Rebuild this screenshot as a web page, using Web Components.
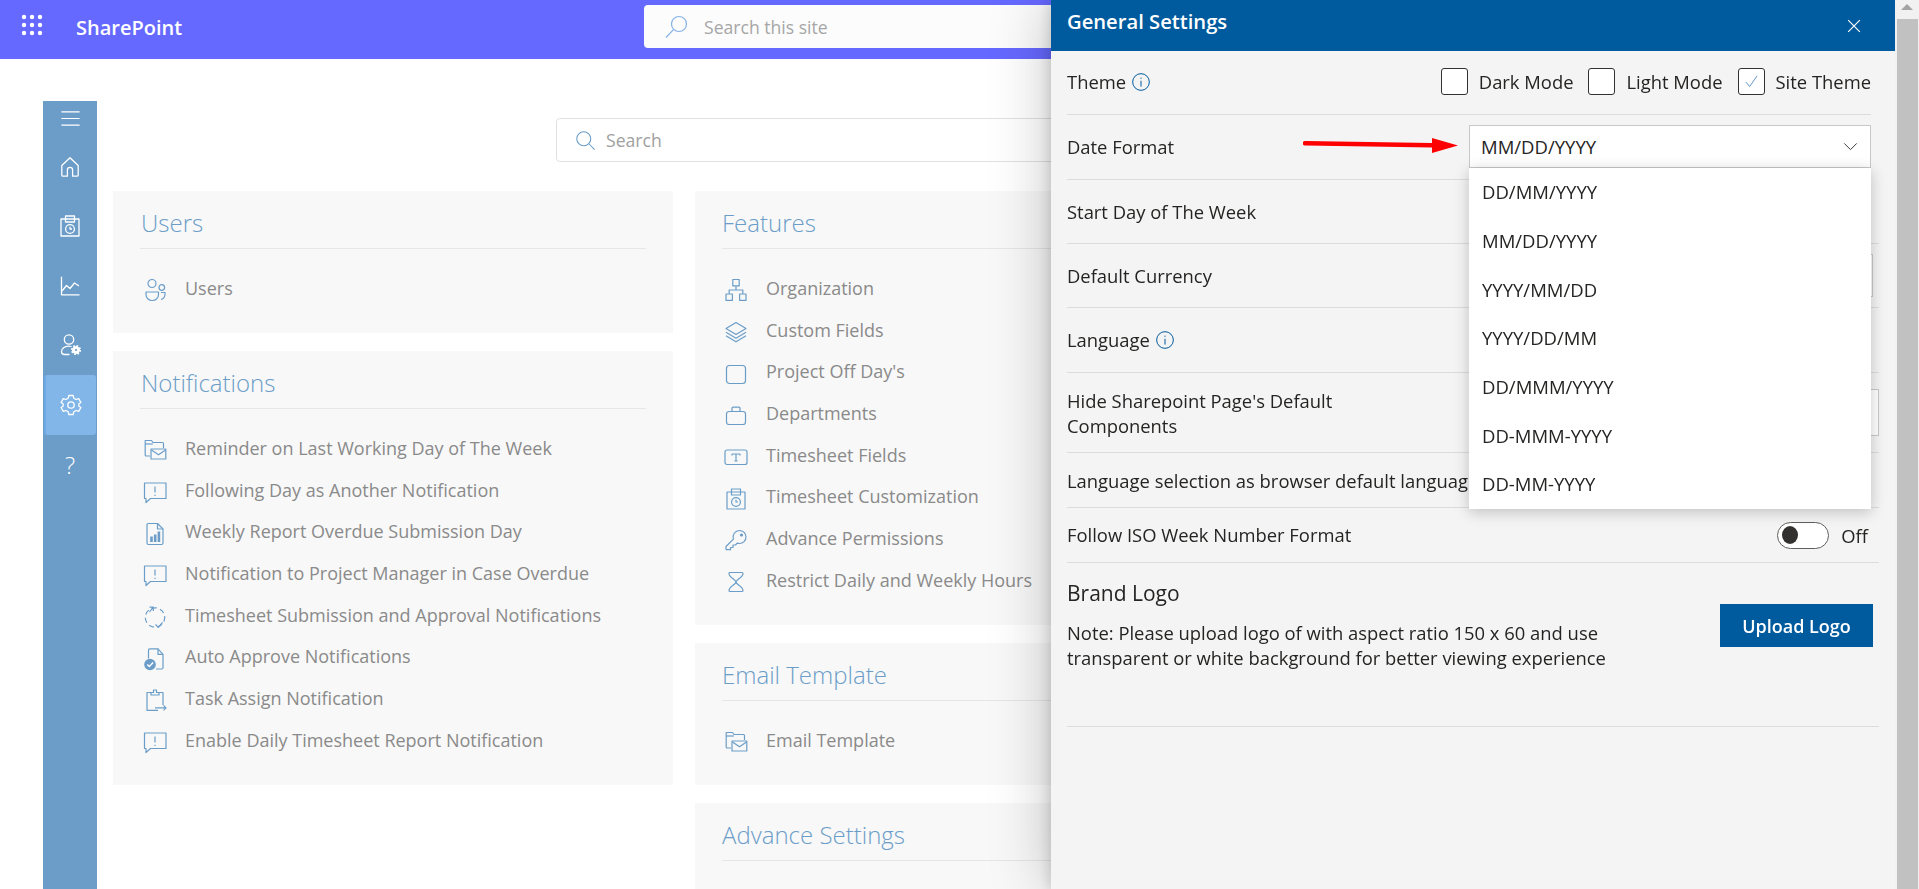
<!DOCTYPE html>
<html lang="en">
<head>
<meta charset="utf-8">
<title>General Settings</title>
<style>
html, body { margin: 0; height: 889px; overflow: hidden; background: #fff; }
body { font-family: "Open Sans", "Noto Sans", sans-serif; }
</style>
</head>
<body>
<app-header></app-header>
<app-workspace>
	<side-rail>
		<rail-item kind="menu" icon="menu"></rail-item>
		<rail-item icon="home"></rail-item>
		<rail-item icon="sheet"></rail-item>
		<rail-item icon="chart"></rail-item>
		<rail-item icon="usercog"></rail-item>
		<rail-item icon="gear" active></rail-item>
		<rail-item>?</rail-item>
	</side-rail>
	<admin-content>
		<info-card slot="left" title="Users">
			<card-row icon="people">Users</card-row>
		</info-card>
		<info-card slot="left" title="Notifications">
			<card-row icon="mailfolder">Reminder on Last Working Day of The Week</card-row>
			<card-row icon="bubble">Following Day as Another Notification</card-row>
			<card-row icon="report">Weekly Report Overdue Submission Day</card-row>
			<card-row icon="bubble">Notification to Project Manager in Case Overdue</card-row>
			<card-row icon="cycle">Timesheet Submission and Approval Notifications</card-row>
			<card-row icon="doccheck">Auto Approve Notifications</card-row>
			<card-row icon="clipboard">Task Assign Notification</card-row>
			<card-row icon="bubble">Enable Daily Timesheet Report Notification</card-row>
		</info-card>
		<info-card slot="right" title="Features" style="--nudge:-1px">
			<card-row icon="org">Organization</card-row>
			<card-row icon="layers">Custom Fields</card-row>
			<card-row icon="square">Project Off Day's</card-row>
			<card-row icon="briefcase">Departments</card-row>
			<card-row icon="textbox">Timesheet Fields</card-row>
			<card-row icon="sheet">Timesheet Customization</card-row>
			<card-row icon="key">Advance Permissions</card-row>
			<card-row icon="hourglass">Restrict Daily and Weekly Hours</card-row>
		</info-card>
		<info-card slot="right" title="Email Template" style="--nudge:-1px">
			<card-row icon="mailfolder">Email Template</card-row>
		</info-card>
		<info-card slot="right" title="Advance Settings" style="--nudge:-1px"></info-card>
	</admin-content>
</app-workspace>

<settings-panel title="General Settings">
	<setting-row style="--h:64px;--end:8px;--up:2px">
		<span>Theme <ui-icon name="info" size="20" color="#005a9e" style="vertical-align:-3px"></ui-icon></span>
		<theme-picker slot="control">
			<theme-check>Dark Mode</theme-check>
			<theme-check>Light Mode</theme-check>
			<theme-check checked>Site Theme</theme-check>
		</theme-picker>
	</setting-row>
	<setting-row style="--h:65px;--end:8px;--up:2px">
		Date Format
		<date-select slot="control" value="MM/DD/YYYY">
			<date-option>DD/MM/YYYY</date-option>
			<date-option>MM/DD/YYYY</date-option>
			<date-option>YYYY/MM/DD</date-option>
			<date-option>YYYY/DD/MM</date-option>
			<date-option>DD/MMM/YYYY</date-option>
			<date-option>DD-MMM-YYYY</date-option>
			<date-option>DD-MM-YYYY</date-option>
		</date-select>
	</setting-row>
	<setting-row style="--h:64px">Start Day of The Week</setting-row>
	<setting-row style="--h:64px">
		Default Currency
		<plain-box slot="control" style="--w:402px;--bh:43px;margin-right:6px"></plain-box>
	</setting-row>
	<setting-row style="--h:65px;--up:2px">
		<span>Language <ui-icon name="info" size="20" color="#005a9e" style="vertical-align:-3px"></ui-icon></span>
	</setting-row>
	<setting-row style="--h:80px">
		<span>Hide Sharepoint Page's Default<br>Components</span>
		<plain-box slot="control" style="--w:410px;--bh:47px"></plain-box>
	</setting-row>
	<setting-row style="--h:55px">Language selection as browser default language</setting-row>
	<setting-row style="--h:55px;--up:2px">
		Follow ISO Week Number Format
		<iso-toggle slot="control">Off</iso-toggle>
	</setting-row>
	<brand-logo></brand-logo>
	<red-arrow slot="overlay"></red-arrow>
</settings-panel>
<scroll-strip></scroll-strip>

<script>
const ICONS = {
	menu: '<path d="M2.500 5h19M2.500 12h19M2.500 19h19"/>',
	home: '<path d="M12 2.800 3.800 10.500V20a1.200 1.200 0 0 0 1.200 1.200h4.400V15a2.600 2.600 0 0 1 5.200 0v6.200H19a1.200 1.200 0 0 0 1.200-1.200v-9.500z"/>',
	sheet: '<rect x="3" y="5" width="18" height="17"/><rect x="7.500" y="2" width="9" height="6"/><circle cx="12" cy="15" r="4.400"/><path d="M12 12.800V15h2"/>',
	chart: '<path d="M3.500 2.800v18h18"/><path d="M4 17l4.500-5.500 3.500 3 4.500-5.500 4.500 3"/>',
	usercog: '<circle cx="11" cy="6.500" r="4.700"/><path d="M13.500 13.500c-1-.3-2-.4-3-.4-4 0-7 2.600-7 5.600 0 1.800 1.300 2.800 3 2.800h5"/><circle cx="18" cy="17" r="3.500" fill="currentColor" stroke-width="1"/><circle cx="18" cy="17" r="4.300" stroke-width="1.600" stroke-dasharray="1.700 1.670"/><circle cx="18" cy="17" r="1.100" fill="#6b9dc8" stroke="none"/>',
	gear: '<path d="M9.800 2.500h4.400l.6 2.700 2.300 1.300 2.600-.8 2.200 3.800-2 1.200v2.600l2 1.200-2.200 3.800-2.600-.8-2.300 1.300-.6 2.700H9.800l-.6-2.700-2.300-1.300-2.600.8-2.200-3.800 2-1.200v-2.600l-2-1.200 2.200-3.800 2.600.8 2.300-1.300z"/><circle cx="12" cy="12" r="3.200"/>',
	people: '<circle cx="9" cy="5.500" r="4"/><circle cx="18.800" cy="9.500" r="2.800"/><path d="M3 14h12.500v2.500a6 6 0 0 1-6 6H9a6 6 0 0 1-6-6z"/><path d="M18 14.500h4v1.800a5.500 5.500 0 0 1-4 5.200"/>',
	mailfolder: '<path d="M7 18H3.200a1 1 0 0 1-1-1V2.500h6.300l1.500 2h9.500a1 1 0 0 1 1 1V10"/><path d="M2.200 6h7.600"/><rect x="8" y="11" width="14.800" height="10"/><path d="M8.500 12l7 4.800 7-4.800"/>',
	bubble: '<path d="M1.500 3h21.500v15.500H7.500L3 22.500v-4H1.500z"/><path d="M12 6.500v6M12 14.800v1.200"/>',
	report: '<path d="M5.200 1.500h9.300l5.500 5.500v14a1.500 1.500 0 0 1-1.500 1.500h-13A1.500 1.500 0 0 1 4 21V2.700a1.200 1.200 0 0 1 1.200-1.200z"/><path d="M14.500 1.500V7H20"/><path fill="currentColor" stroke="none" d="M7.200 14.500h2.600v5.500H7.200zM10.900 12.500h2.600V20h-2.600zM14.600 9.500h2.600V20h-2.600z"/>',
	cycle: '<circle cx="12" cy="12.500" r="9.700" stroke-dasharray="5.200 3.400" stroke-dashoffset="1"/><path d="M6.500 7l3.800-4.800M6.500 2.200h3.800V6"/><path d="M12.500 19.500l2.800 2.800 4.200-5"/>',
	doccheck: '<path d="M5.500 11.500V3a1.200 1.200 0 0 1 1.200-1.200H15l5 5.500v13.500a1.200 1.200 0 0 1-1.200 1.200H13"/><path d="M15 1.800v5.500h5"/><circle cx="7" cy="17.500" r="5.800" fill="currentColor" stroke="none"/><path stroke="#fff" stroke-width="1.500" d="M4.300 17.500l2 2 3.800-4"/>',
	clipboard: '<path d="M8 4.500H4v17.800h11"/><path d="M16 4.500h4V17"/><path d="M8 7V4.500h2.500V2h3v2.500H16V7z"/><path d="M12 19.800h11M20.500 17.300l2.500 2.500-2.500 2.500"/>',
	org: '<rect x="8.800" y="1.500" width="6.400" height="6.400"/><rect x="2" y="16" width="6.400" height="6.400"/><rect x="15.600" y="16" width="6.400" height="6.400"/><path d="M12 7.900V12M5.200 16v-4h13.600v4"/>',
	layers: '<path d="M12 2.500 22 8.500l-10 6-10-6z"/><path d="M2 12.200l10 6 10-6"/><path d="M2 15.800l10 6 10-6"/>',
	square: '<rect x="2.500" y="3.500" width="19" height="18" rx="3"/>',
	briefcase: '<rect x="2.500" y="8.500" width="19" height="13" rx="2.500"/><path d="M8 8.500V5.200a1 1 0 0 1 1-1h6a1 1 0 0 1 1 1v3.300"/>',
	textbox: '<rect x="1" y="5" width="22" height="14.500" rx="2"/><path d="M8 10.500V9h8v1.500M12 9v7M10.200 16h3.600"/>',
	key: '<path d="M15.500 2.500a6.500 6.500 0 0 1 0 13c-.8 0-1.600-.1-2.300-.4l-1.700 1.900H9v2.500H6.500v2.200H2.500a.5.5 0 0 1-.5-.5v-2.700l7.400-7.400a6.500 6.500 0 0 1 6.100-8.600z"/><circle cx="17.500" cy="7" r="1" fill="currentColor"/>',
	hourglass: '<path d="M6 2.500h12a1 1 0 0 1 1 1c0 4-7 6-7 8.500s7 4.500 7 8.500a1 1 0 0 1-1 1H6a1 1 0 0 1-1-1c0-4 7-6 7-8.500S5 7.500 5 3.500a1 1 0 0 1 1-1z"/>',
	info: '<circle cx="12" cy="12" r="10"/><path d="M12 10.500v7M12 6.800v1.400"/>',
	lens: '<circle cx="10" cy="10" r="8"/><path d="M16 16l6.500 6.500"/>',
	lensflip: '<circle cx="15" cy="9" r="7.500"/><path d="M9.700 14.300 2 22.500"/>',
	close: '<path d="M2 2l20 20M22 2 2 22"/>',
	chevron: '<path d="M2 7l10 10L22 7"/>',
	tick: '<path d="M3 13l6 7L21 3"/>'
};

// small helper, most elements are only markup plus styles
function component(tag, markup) {
	customElements.define(tag, class extends HTMLElement {
		connectedCallback() {
			if (this.shadowRoot) return;
			this.attachShadow({mode: 'open'}).innerHTML = typeof markup === 'function' ? markup(this) : markup;
		}
	});
}

component('ui-icon', el => {
	const size = el.getAttribute('size') || 24;
	const color = el.getAttribute('color') || '#6b9dc8';
	const width = el.getAttribute('stroke') || 1.2;
	return `<style>
		:host { display:inline-block; width:${size}px; height:${size}px; color:${color}; line-height:0; }
		svg { width:100%; height:100%; fill:none; stroke:currentColor; stroke-width:${width}; stroke-linejoin:round; overflow:visible; }
	</style>
	<svg viewBox="0 0 24 24">${ICONS[el.getAttribute('name')]}</svg>`;
});

component('app-header', `<style>
	:host { display:flex; align-items:center; height:59px; background:#6669ff; color:#fff; }
	.waffle { width:24px; height:24px; margin:0 0 9px 20px; fill:#fff; }
	.name { margin:0 0 5px 32px; font-size:20px; font-weight:600; }
	.search { display:flex; align-items:center; box-sizing:border-box; position:absolute; left:644px; top:5px; width:640px; height:43px; padding-left:20px; background:#fcfcfc; border-radius:4px; color:#a6a6a6; font-size:17.600px; }
	ui-icon { margin-right:16px; }
</style>
<svg class="waffle" viewBox="0 0 24 24"><circle cx="4" cy="4" r="2.200"/><circle cx="12" cy="4" r="2.200"/><circle cx="20" cy="4" r="2.200"/><circle cx="4" cy="12" r="2.200"/><circle cx="12" cy="12" r="2.200"/><circle cx="20" cy="12" r="2.200"/><circle cx="4" cy="20" r="2.200"/><circle cx="12" cy="20" r="2.200"/><circle cx="20" cy="20" r="2.200"/></svg>
<span class="name">SharePoint</span>
<div class="search"><ui-icon name="lensflip" size="24" color="#84b2e6"></ui-icon>Search this site</div>`);

component('app-workspace', `<style>
	:host { display:flex; height:788px; margin-top:42px; padding-left:43px; }
</style><slot></slot>`);

component('side-rail', `<style>
	:host { display:block; flex:none; width:54px; background:#6b9dc8; color:#fff; }
</style><slot></slot>`);

component('rail-item', el => {
	const icon = el.getAttribute('icon');
	const menu = el.getAttribute('kind') === 'menu';
	return `<style>
		:host { display:flex; align-items:center; justify-content:center; box-sizing:border-box; height:${menu ? 36 : 59.500}px; ${menu ? 'padding-bottom:2px;' : ''} font-size:24px; font-weight:300; }
		:host([active]) { background:#82b6e8; border-left:2px solid #6ea9e6; border-radius:3px; margin:0 1px 0 1px; }
	</style>${icon ? `<ui-icon name="${icon}" size="${menu ? 23 : 24}" color="#fff" stroke="1.300"></ui-icon>` : '<slot></slot>'}`;
});

component('admin-content', `<style>
	:host { display:block; margin-left:16px; }
	.search { display:flex; align-items:center; box-sizing:border-box; width:760px; height:44px; margin:17px 0 29px 443px; padding-left:18px; background:#fff; border:1px solid #e1e1e1; border-radius:4px; color:#a0a0a0; font-size:17.600px; }
	ui-icon { margin-right:10px; }
	.cols { display:grid; grid-template-columns:560px 560px; gap:22px; }
	.col { display:flex; flex-direction:column; gap:18px; }
</style>
<div class="search"><ui-icon name="lens" size="21"></ui-icon>Search</div>
<div class="cols">
	<div class="col"><slot name="left"></slot></div>
	<div class="col"><slot name="right"></slot></div>
</div>`);

component('info-card', el => `<style>
	:host { display:block; box-sizing:border-box; padding:0 27px 24.300px; background:#f8f8f8; }
	h2 { box-sizing:border-box; height:58px; margin:0 0 18px; padding-left:calc(1px + var(--nudge, 0px)); border-bottom:1px solid #e6e6e6; color:#6b9dc8; font-size:24px; font-weight:300; line-height:64px; white-space:nowrap; }
</style>
<h2>${el.getAttribute('title')}</h2>
<slot></slot>`);

component('card-row', el => `<style>
	:host { display:flex; align-items:center; height:41.700px; padding-left:calc(3px + var(--nudge, 0px)); color:#8a8a8a; font-size:18px; white-space:nowrap; }
	ui-icon { flex:none; margin:5px 18px 0 0; }
</style>
<ui-icon name="${el.getAttribute('icon')}"></ui-icon><slot></slot>`);

component('settings-panel', el => `<style>
	:host { display:block; position:fixed; left:1051px; top:0; width:844px; height:889px; background:#f4f4f4; color:#252423; box-shadow:0 0 58px rgba(0,0,0,.24), 0 0 14px rgba(0,0,0,.18); }
	header { display:flex; justify-content:space-between; align-items:center; box-sizing:border-box; height:51px; padding:0 34px 0 16px; background:#005a9e; color:#fff; }
	h1 { margin:0 0 9px; font-size:20.200px; font-weight:600; }
	.body { padding:0 0 0 16px; }
</style>
<header><h1>${el.getAttribute('title')}</h1><ui-icon name="close" size="14" color="#fff" stroke="2"></ui-icon></header>
<div class="body"><slot></slot></div>
<slot name="overlay"></slot>`);

component('setting-row', `<style>
	:host { display:flex; justify-content:space-between; align-items:center; box-sizing:border-box; height:var(--h); margin-right:calc(16px + var(--end, 0px)); padding-bottom:var(--up, 0px); border-bottom:1px solid #dcdcdc; font-size:18.400px; font-weight:500; line-height:25px; white-space:nowrap; }
</style><div><slot></slot></div><slot name="control"></slot>`);

component('theme-picker', `<style>
	:host { display:flex; gap:15px; }
</style><slot></slot>`);

component('theme-check', el => `<style>
	:host { display:flex; align-items:center; gap:11px; }
	.box { display:flex; align-items:center; justify-content:center; box-sizing:border-box; width:27px; height:27px; background:#fff; border:1px solid #323130; border-radius:3px; }
</style>
<span class="box">${el.hasAttribute('checked') ? '<ui-icon name="tick" size="15" color="#2f74b8"></ui-icon>' : ''}</span><slot></slot>`);

component('date-select', el => `<style>
	:host { display:block; position:relative; z-index:5; box-sizing:border-box; width:402px; height:43px; background:#fff; border:1px solid #c8c8c8; font-size:18.500px; font-weight:400; }
	.value { display:flex; justify-content:space-between; align-items:center; height:41px; padding:0 12px 0 11px; }
	.menu { position:absolute; left:-1px; right:-1px; top:42px; height:341px; background:#fff; box-shadow:0 3px 14px rgba(0,0,0,.22); }
</style>
<div class="value">${el.getAttribute('value')}<ui-icon name="chevron" size="15" color="#333" stroke="1.500"></ui-icon></div>
<div class="menu"><slot></slot></div>`);

component('date-option', `<style>
	:host { display:flex; align-items:center; height:48.700px; padding-left:13px; }
</style><slot></slot>`);

component('plain-box', `<style>
	:host { display:block; box-sizing:border-box; width:var(--w); height:var(--bh); background:#fff; border:1px solid #c8c8c8; }
</style>`);

component('iso-toggle', `<style>
	:host { display:flex; align-items:center; gap:12px; margin:2px 11px 0 0; font-weight:400; }
	.track { display:flex; align-items:center; box-sizing:border-box; width:52px; height:27px; padding-left:4px; background:#fff; border:1px solid #605e5c; border-radius:14px; }
	.track i { width:16px; height:18px; background:#323130; border-radius:50%; }
</style>
<span class="track"><i></i></span><slot></slot>`);

component('brand-logo', `<style>
	:host { display:flex; justify-content:space-between; align-items:flex-start; box-sizing:border-box; height:164px; margin-right:16px; padding-top:17px; border-bottom:1px solid #dcdcdc; }
	h3 { margin:0 0 14px; font-size:21px; font-weight:500; line-height:26px; }
	p { margin:0; font-size:18.400px; font-weight:500; line-height:25px; white-space:nowrap; }
	button { width:153px; height:43px; margin:24px 6px 0 0; background:#005a9e; border:0; color:#fff; font:600 18px "Open Sans", "Noto Sans", sans-serif; }
</style>
<div><h3>Brand Logo</h3><p>Note: Please upload logo of with aspect ratio 150 x 60 and use<br>transparent or white background for better viewing experience</p></div>
<button>Upload Logo</button>`);

component('red-arrow', `<style>
	:host { display:block; position:absolute; left:252px; top:136px; width:155px; height:18px; }
	svg { width:100%; height:100%; fill:#f00; }
</style>
<svg viewBox="0 0 155 18"><path d="M2 5 129 7V2l26 7.500L129 17v-5.500L2 9.500a2.200 2.200 0 0 1 0-4.500z"/></svg>`);

component('scroll-strip', `<style>
	:host { display:block; position:fixed; left:1895px; top:0; width:24px; height:889px; background:#f1f1f1; }
	.up { width:0; margin:4px auto 0; border:6px solid transparent; border-top:0; border-bottom-color:#a3a3a3; }
	.thumb { position:absolute; left:2px; right:1px; top:19px; bottom:0; background:#c1c1c1; }
</style>
<div class="up"></div><div class="thumb"></div>`);
</script>
</body>
</html>
